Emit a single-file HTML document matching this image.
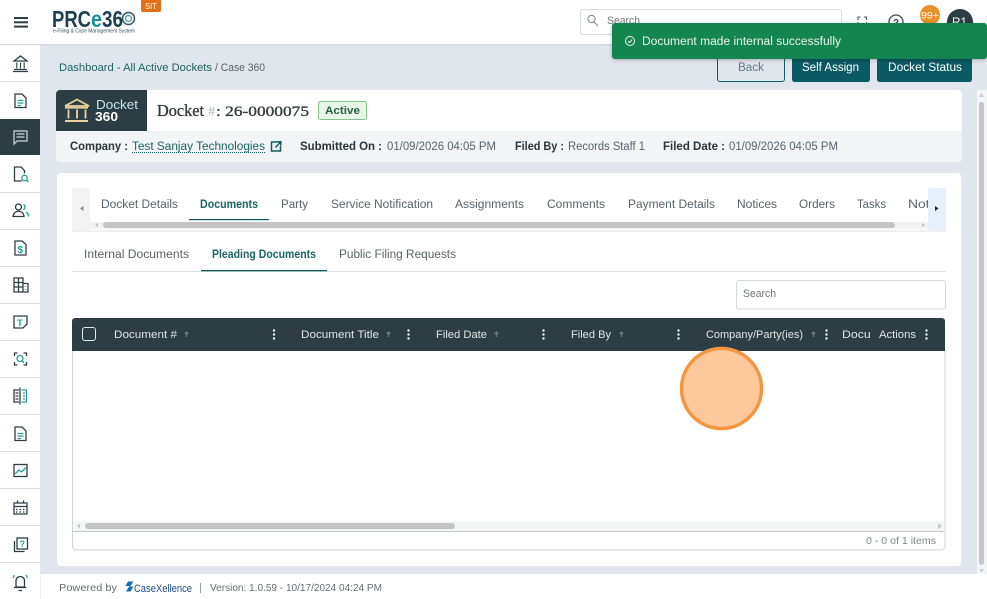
<!DOCTYPE html>
<html><head><meta charset="utf-8"><title>Case 360</title>
<style>
html,body{margin:0;padding:0;background:#fff;width:987px;height:599px;overflow:hidden}
svg{display:block}
text{font-family:"Liberation Sans",sans-serif;font-size:11.5px;fill:#4a5257}
.b{font-weight:bold}
.t{fill:#1a6463}
.g{fill:#5a6267}
.i{fill:none;stroke:#2c3e44;stroke-width:1.3}
.a{fill:none;stroke:#2a9d98;stroke-width:1.3}
</style></head><body>
<svg width="987" height="599" viewBox="0 0 987 599" xmlns="http://www.w3.org/2000/svg">
<defs>
<clipPath id="tabclip"><rect x="90" y="188" width="838" height="43"/></clipPath>
<clipPath id="docuclip"><rect x="840" y="320" width="30" height="28"/></clipPath>
<filter id="sh" x="-5%" y="-20%" width="110%" height="150%"><feGaussianBlur stdDeviation="2"/></filter>
</defs>
<rect width="987" height="599" fill="#fff"/>
<rect x="40" y="44" width="947" height="530" fill="#e1e6ed"/>
<rect x="0" y="44" width="987" height="1.500" fill="#d5d9de"/>

<!-- right scrollbar -->
<rect x="977" y="90" width="10" height="484" fill="#f4f5f6"/>
<rect x="979" y="102" width="5" height="463" rx="2.500" fill="#c6c6c6"/>
<path d="M981.500 93l2.500 4h-5z" fill="#cfcfcf"/>
<path d="M981.500 573l2.500-4h-5z" fill="#cfcfcf"/>

<!-- header -->
<rect x="14" y="17" width="14" height="2" fill="#2c3e44"/><rect x="14" y="21.300" width="14" height="2" fill="#2c3e44"/><rect x="14" y="25.600" width="14" height="2" fill="#2c3e44"/>
<text x="52" y="27" class="b" style="font-size:23px;fill:#1e4150" textLength="39" lengthAdjust="spacingAndGlyphs">PRC</text>
<text x="91" y="27" class="b" style="font-size:23px;fill:#1f8e9a" textLength="11" lengthAdjust="spacingAndGlyphs">e</text>
<text x="102" y="27" class="b" style="font-size:23px;fill:#1e4150" textLength="21" lengthAdjust="spacingAndGlyphs">36</text>
<circle cx="128.500" cy="18.500" r="6" fill="none" stroke="#2c5a66" stroke-width="1.500"/><circle cx="128.500" cy="18.500" r="3" fill="none" stroke="#5ba3ad" stroke-width="1.400"/>
<text x="53" y="32.500" style="font-size:5.500px;fill:#35505c" textLength="82" lengthAdjust="spacingAndGlyphs">e-Filing &amp; Case Management System</text>
<rect x="141" y="-3" width="20" height="15" rx="2" fill="#e06f17"/>
<text x="145" y="9" style="font-size:8px;fill:#fff" textLength="12" lengthAdjust="spacingAndGlyphs">SIT</text>

<rect x="580.500" y="9.500" width="261" height="25" rx="2" fill="#fff" stroke="#d9dcdf"/>
<circle cx="591.500" cy="19" r="3.600" fill="none" stroke="#7a8085" stroke-width="1"/><path d="M594 22l4 4" stroke="#7a8085" stroke-width="1.100"/>
<text x="607" y="24" style="font-size:11px;fill:#777" textLength="33" lengthAdjust="spacingAndGlyphs">Search</text>
<path d="M858 20v-3h2.500M864 17h2.500v3M858 22v3h2.500M866.500 22v3H864" fill="none" stroke="#45525a" stroke-width="1.100"/>
<circle cx="896" cy="22" r="7" fill="none" stroke="#3c484e" stroke-width="1.300"/>
<text x="893" y="26" style="font-size:10px;fill:#3c484e" class="b">?</text>
<circle cx="930" cy="15" r="10" fill="#e8912a"/>
<text x="921" y="18.500" style="font-size:9px;fill:#fff" textLength="18" lengthAdjust="spacingAndGlyphs">99+</text>
<circle cx="960" cy="22" r="13" fill="#2c3e44"/>
<text x="952" y="26" style="font-size:12px;fill:#fff" textLength="15" lengthAdjust="spacingAndGlyphs">R1</text>

<!-- sidebar -->
<rect x="0" y="45" width="40" height="529" fill="#fff"/>
<rect x="0" y="574" width="40" height="25" fill="#fff"/>
<rect x="40" y="574" width="1" height="25" fill="#eceef0"/>
<g fill="#d9dcdf">
<rect y="81" width="40" height="1"/><rect y="192" width="40" height="1"/><rect y="229" width="40" height="1"/><rect y="266" width="40" height="1"/><rect y="303" width="40" height="1"/><rect y="340" width="40" height="1"/><rect y="377" width="40" height="1"/><rect y="414" width="40" height="1"/><rect y="451" width="40" height="1"/><rect y="488" width="40" height="1"/><rect y="525" width="40" height="1"/><rect y="562" width="40" height="1"/>
</g>
<rect x="0" y="119" width="40" height="36" fill="#2c3e44"/>
<path class="i" d="M14 61l6.500-5 6.500 5zM14 69.500h13M13 71.500h15"/>
<path d="M16.800 62.500v6M20.500 62.500v6M24.200 62.500v6" fill="none" stroke="#2c3e44" stroke-width="1.100"/>
<path class="i" d="M15 94h7l4 4v9.500H15z"/><path class="a" d="M17.500 100.500h6M17.500 103h6M17.500 105.500h3.500"/>
<path d="M14 131h13v10H17l-3 3z" fill="none" stroke="#cfd8da" stroke-width="1.200"/><path d="M16.500 134h8M16.500 137h8" stroke="#cfd8da" stroke-width="1.300"/>
<path class="i" d="M22 181h-7.500v-14H21l3.500 3.500v3"/><circle cx="24.500" cy="178" r="2.700" class="a"/><path class="a" d="M26.500 180l2 2"/>
<circle cx="18.500" cy="207" r="3" class="i"/><path class="i" d="M13 216.500c.5-7 10.500-7 11 0z"/><path class="a" d="M23.500 204.500c2 1 2 4 0 5M26 212c1.800 1 2.500 2.500 2.500 4.500"/>
<path class="i" d="M15 241h7l4 3.500V255H15z"/><text x="17.500" y="253" style="font-size:10px;fill:#2a9d98" class="b">$</text>
<path class="i" d="M14 278h9v14h-9zM23 283.500h5V292h-5M14 282.500h9M14 287h9M18.500 278v14"/><path class="a" d="M25.500 286v1M25.500 289v1"/>
<path class="i" d="M14 316h13v8l-4 4h-9z"/><text x="17" y="326" style="font-size:9.500px;fill:#2a9d98" class="b">T</text>
<path class="i" d="M14.500 356v-3h3M23.500 353h3v3M14.500 362v3h3M26.500 362v3h-3"/><circle cx="20" cy="358.500" r="3" class="a"/><path class="a" d="M22 361l2 2"/>
<path class="i" d="M19 390h-5v12h5M20 387.500v17"/><path class="a" d="M21.500 390h5v12h-5"/><path class="i" d="M15.500 393h3M15.500 396h3M15.500 399h3"/><path class="a" d="M23 393h2M23 396h2M23 399h2"/>
<path class="i" d="M15 427h7l4 4v9.500H15z"/><path class="a" d="M17.500 433.500h6M17.500 436h6M17.500 438.500h3.500"/>
<rect x="14" y="464.500" width="13" height="12" class="i"/><path class="a" d="M15 474l4-4 2.500 2 4.500-4.500"/>
<path class="i" d="M14 503h13v11H14zM14 506.500h13M17.500 500.500v3M23.500 500.500v3"/><path class="i" stroke-dasharray="1.500 2" d="M16 509.500h9M16 512h9"/>
<rect x="17" y="538" width="10.500" height="11" class="i"/><path class="i" d="M14.500 541v10.500h10"/><text x="19.500" y="547" style="font-size:9px;fill:#2a9d98" class="b">?</text>
<path class="i" d="M16 587v-6c0-6 8.500-6 8.500 0v6zM14 587.500h12.500M18.500 590.500h3.500"/><path class="a" d="M14.500 575l-1.500 3M26 575l1.500 3"/>

<!-- breadcrumb -->
<text x="59" y="71" class="t" style="font-size:11px" textLength="153" lengthAdjust="spacingAndGlyphs">Dashboard - All Active Dockets</text>
<text x="215" y="71" class="g" style="font-size:11px" textLength="50" lengthAdjust="spacingAndGlyphs">/ Case 360</text>

<!-- action buttons -->
<rect x="717.500" y="53.500" width="67" height="28" rx="2.500" fill="#e1e6ed" stroke="#0b5d66"/>
<text x="738" y="71" style="fill:#607a82" textLength="26" lengthAdjust="spacingAndGlyphs">Back</text>
<rect x="792" y="53" width="78" height="29" rx="2.500" fill="#0b5a63"/>
<text x="802" y="71" style="fill:#fff" textLength="57" lengthAdjust="spacingAndGlyphs">Self Assign</text>
<rect x="877" y="53" width="95" height="29" rx="2.500" fill="#0b5a63"/>
<text x="888" y="71" style="fill:#fff" textLength="74" lengthAdjust="spacingAndGlyphs">Docket Status</text>

<!-- docket card -->
<rect x="56" y="90" width="906" height="72" rx="4" fill="#fff"/>
<path d="M56 131h906v27a4 4 0 0 1-4 4H60a4 4 0 0 1-4-4z" fill="#f2f4f6"/>
<path d="M60 90h87v41H56V94a4 4 0 0 1 4-4z" fill="#2c3e44"/>
<path d="M65 106l12-6.500 12 6.500z" fill="none" stroke="#e8d2a0" stroke-width="1.800"/>
<path d="M68.500 109.500v9M77 109.500v9M85.500 109.500v9" stroke="#e8d2a0" stroke-width="1.800"/>
<rect x="65" y="120" width="23" height="2" fill="#e8d2a0"/>
<rect x="65" y="107" width="23" height="1.600" fill="#e8d2a0"/>
<text x="96" y="109" style="font-size:13px;fill:#c5e4ea" textLength="42" lengthAdjust="spacingAndGlyphs">Docket</text>
<text x="95" y="121" class="b" style="font-size:13px;fill:#fff" textLength="23" lengthAdjust="spacingAndGlyphs">360</text>
<text x="157" y="116" style="font-family:'Liberation Serif',serif;font-size:16.500px;fill:#33393c;stroke:#33393c;stroke-width:.35" textLength="47" lengthAdjust="spacingAndGlyphs">Docket</text>
<text x="208" y="116" style="font-family:'Liberation Serif',serif;font-size:14px;fill:#aeb3b6">#</text>
<text x="216" y="116" style="font-family:'Liberation Serif',serif;font-size:15px;fill:#33393c;stroke:#33393c;stroke-width:.35" textLength="93" lengthAdjust="spacingAndGlyphs">: 26-0000075</text>
<rect x="318.500" y="101.500" width="48" height="18" rx="2" fill="#e8f6ea" stroke="#85c08d"/>
<text x="325" y="114" class="b" style="fill:#2a5f42;font-size:11px" textLength="35" lengthAdjust="spacingAndGlyphs">Active</text>

<text x="70" y="150" class="b" style="fill:#2b3438" textLength="58" lengthAdjust="spacingAndGlyphs">Company :</text>
<text x="132" y="150" class="t" textLength="133" lengthAdjust="spacingAndGlyphs">Test Sanjay Technologies</text>
<path d="M132 152.500h134" stroke="#0f5c5c" stroke-width="1" stroke-dasharray="1 1"/>
<path d="M277 142h-5.500v9h9v-5M275.500 147.500l5-5.500M277 141.800h3.800v3.800" fill="none" stroke="#0f5c5c" stroke-width="1.500"/>
<text x="300" y="150" class="b" style="fill:#2b3438" textLength="82" lengthAdjust="spacingAndGlyphs">Submitted On :</text>
<text x="387" y="150" class="g" textLength="109" lengthAdjust="spacingAndGlyphs">01/09/2026 04:05 PM</text>
<text x="515" y="150" class="b" style="fill:#2b3438" textLength="49" lengthAdjust="spacingAndGlyphs">Filed By :</text>
<text x="568" y="150" class="g" textLength="77" lengthAdjust="spacingAndGlyphs">Records Staff 1</text>
<text x="663" y="150" class="b" style="fill:#2b3438" textLength="62" lengthAdjust="spacingAndGlyphs">Filed Date :</text>
<text x="729" y="150" class="g" textLength="109" lengthAdjust="spacingAndGlyphs">01/09/2026 04:05 PM</text>

<!-- main card -->
<rect x="57" y="173" width="904" height="393" rx="4" fill="#fff"/>

<!-- tabs -->
<rect x="72" y="188" width="18" height="42" rx="2" fill="#f3f3f3"/>
<path d="M83.500 206v5l-3.500-2.500z" fill="#8a8a8a"/>
<rect x="90" y="222" width="838" height="7" fill="#f2f2f2"/>
<rect x="103" y="222" width="792" height="6" rx="3" fill="#c4c4c4"/>
<path d="M98 223v4l-3-2z" fill="#c4c4c4"/><path d="M922 223v4l3-2z" fill="#c4c4c4"/>
<g clip-path="url(#tabclip)">
<text x="101" y="208" class="g" textLength="77" lengthAdjust="spacingAndGlyphs">Docket Details</text>
<text x="200" y="208" class="b t" textLength="58" lengthAdjust="spacingAndGlyphs">Documents</text>
<text x="281" y="208" class="g" textLength="27" lengthAdjust="spacingAndGlyphs">Party</text>
<text x="331" y="208" class="g" textLength="102" lengthAdjust="spacingAndGlyphs">Service Notification</text>
<text x="455" y="208" class="g" textLength="69" lengthAdjust="spacingAndGlyphs">Assignments</text>
<text x="547" y="208" class="g" textLength="58" lengthAdjust="spacingAndGlyphs">Comments</text>
<text x="628" y="208" class="g" textLength="87" lengthAdjust="spacingAndGlyphs">Payment Details</text>
<text x="737" y="208" class="g" textLength="40" lengthAdjust="spacingAndGlyphs">Notices</text>
<text x="799" y="208" class="g" textLength="36" lengthAdjust="spacingAndGlyphs">Orders</text>
<text x="857" y="208" class="g" textLength="29" lengthAdjust="spacingAndGlyphs">Tasks</text>
<text x="908" y="208" class="g" textLength="36" lengthAdjust="spacingAndGlyphs">Notes</text>
</g>
<rect x="189" y="219" width="80" height="1.200" fill="#0f5c5c"/>
<rect x="928" y="188" width="18" height="42" rx="2" fill="#e5f0fa"/>
<path d="M935 206v5l3.500-2.500z" fill="#222"/>
<rect x="72" y="230.500" width="874" height="1" fill="#dcdfe2"/>

<!-- sub tabs -->
<text x="84" y="258" class="g" textLength="105" lengthAdjust="spacingAndGlyphs">Internal Documents</text>
<text x="212" y="258" class="b t" textLength="104" lengthAdjust="spacingAndGlyphs">Pleading Documents</text>
<text x="339" y="258" class="g" textLength="117" lengthAdjust="spacingAndGlyphs">Public Filing Requests</text>
<rect x="72" y="271" width="874" height="1" fill="#dfe2e4"/>
<rect x="201" y="270" width="126" height="1.300" fill="#0f5c5c"/>

<!-- search -->
<rect x="736.500" y="280.500" width="209" height="28.500" rx="2" fill="#fff" stroke="#d7dadc"/>
<text x="743" y="297" style="font-size:11px;fill:#6f7579" textLength="33" lengthAdjust="spacingAndGlyphs">Search</text>

<!-- table -->
<path d="M72.500 351v195a4 4 0 0 0 4 4H941a4 4 0 0 0 4-4V351" fill="#fff" stroke="#d0d3d5"/>
<path d="M72 351v-30a3 3 0 0 1 3-3h867a3 3 0 0 1 3 3v30z" fill="#2c3e44"/>
<rect x="82.500" y="327.500" width="13" height="13" rx="2.500" fill="none" stroke="#e5e8e9" stroke-width="1"/>
<text x="114" y="338" style="fill:#dfe5e6;font-size:11px" textLength="63" lengthAdjust="spacingAndGlyphs">Document #</text>
<text x="301" y="338" style="fill:#dfe5e6;font-size:11px" textLength="78" lengthAdjust="spacingAndGlyphs">Document Title</text>
<text x="436" y="338" style="fill:#dfe5e6;font-size:11px" textLength="51" lengthAdjust="spacingAndGlyphs">Filed Date</text>
<text x="571" y="338" style="fill:#dfe5e6;font-size:11px" textLength="40" lengthAdjust="spacingAndGlyphs">Filed By</text>
<text x="706" y="338" style="fill:#dfe5e6;font-size:11px" textLength="97" lengthAdjust="spacingAndGlyphs">Company/Party(ies)</text>
<g clip-path="url(#docuclip)"><text x="842" y="338" style="fill:#dfe5e6;font-size:11px" textLength="56" lengthAdjust="spacingAndGlyphs">Document</text></g>
<text x="879" y="338" style="fill:#dfe5e6;font-size:11px" textLength="37" lengthAdjust="spacingAndGlyphs">Actions</text>
<g fill="#6d7b80">
<path d="M186.500 331l2.500 3h-1.800v3h-1.400v-3H184z"/>
<path d="M388.500 331l2.500 3h-1.800v3h-1.400v-3H386z"/>
<path d="M496.500 331l2.500 3h-1.800v3h-1.400v-3H494z"/>
<path d="M621.500 331l2.500 3h-1.800v3h-1.400v-3H619z"/>
<path d="M813.500 331l2.500 3h-1.800v3h-1.400v-3H811z"/>
</g>
<g fill="#eef1f2">
<circle cx="274" cy="330.500" r="1.200"/><circle cx="274" cy="334.500" r="1.200"/><circle cx="274" cy="338.500" r="1.200"/>
<circle cx="408.500" cy="330.500" r="1.200"/><circle cx="408.500" cy="334.500" r="1.200"/><circle cx="408.500" cy="338.500" r="1.200"/>
<circle cx="543.500" cy="330.500" r="1.200"/><circle cx="543.500" cy="334.500" r="1.200"/><circle cx="543.500" cy="338.500" r="1.200"/>
<circle cx="678.500" cy="330.500" r="1.200"/><circle cx="678.500" cy="334.500" r="1.200"/><circle cx="678.500" cy="338.500" r="1.200"/>
<circle cx="826.500" cy="330.500" r="1.200"/><circle cx="826.500" cy="334.500" r="1.200"/><circle cx="826.500" cy="338.500" r="1.200"/>
<circle cx="926.500" cy="330.500" r="1.200"/><circle cx="926.500" cy="334.500" r="1.200"/><circle cx="926.500" cy="338.500" r="1.200"/>
</g>
<rect x="73" y="521" width="871" height="10" fill="#f4f5f5"/>
<rect x="85" y="523" width="370" height="6" rx="3" fill="#c4c4c4"/>
<path d="M80 523.500v5l-3.500-2.500z" fill="#c8c8c8"/><path d="M938 523v6l4-3z" fill="#c8c8c8"/>
<rect x="73" y="531" width="871" height="1" fill="#c8cbcd"/>
<text x="866" y="544" style="font-size:10.500px;fill:#83888c" textLength="70" lengthAdjust="spacingAndGlyphs">0 - 0 of 1 items</text>

<!-- highlight circle -->
<circle cx="721.500" cy="388.500" r="40" fill="#fdc89b" stroke="#f5953f" stroke-width="3.500"/>

<!-- footer -->
<text x="59" y="591" style="font-size:10.500px;fill:#666c71" textLength="58" lengthAdjust="spacingAndGlyphs">Powered by</text>
<path d="M133.500 581.500h-5.500l-2.500 4.500h4l-3.500 5.500h4.500l3-5h-3.500z" fill="#0d6fb8"/>
<text x="134" y="592" style="font-size:11px;fill:#1c4a86" textLength="58" lengthAdjust="spacingAndGlyphs">CaseXellence</text>
<rect x="200" y="583" width="1" height="10" fill="#9aa0a4"/>
<text x="210" y="591" style="font-size:10.500px;fill:#666c71" textLength="172" lengthAdjust="spacingAndGlyphs">Version: 1.0.59 - 10/17/2024 04:24 PM</text>

<!-- toast -->
<rect x="612" y="24" width="375" height="36" rx="3" fill="#000" opacity=".25" filter="url(#sh)"/>
<rect x="612" y="23" width="375" height="36" rx="3" fill="#138550"/>
<circle cx="630" cy="41" r="4.500" fill="none" stroke="#e8f5ee" stroke-width="1"/>
<path d="M628 41l1.600 1.600 2.600-3" fill="none" stroke="#e8f5ee" stroke-width="1"/>
<text x="642" y="45" style="font-size:11.500px;fill:#e9f6ef" textLength="199" lengthAdjust="spacingAndGlyphs">Document made internal successfully</text>
</svg>
</body></html>
